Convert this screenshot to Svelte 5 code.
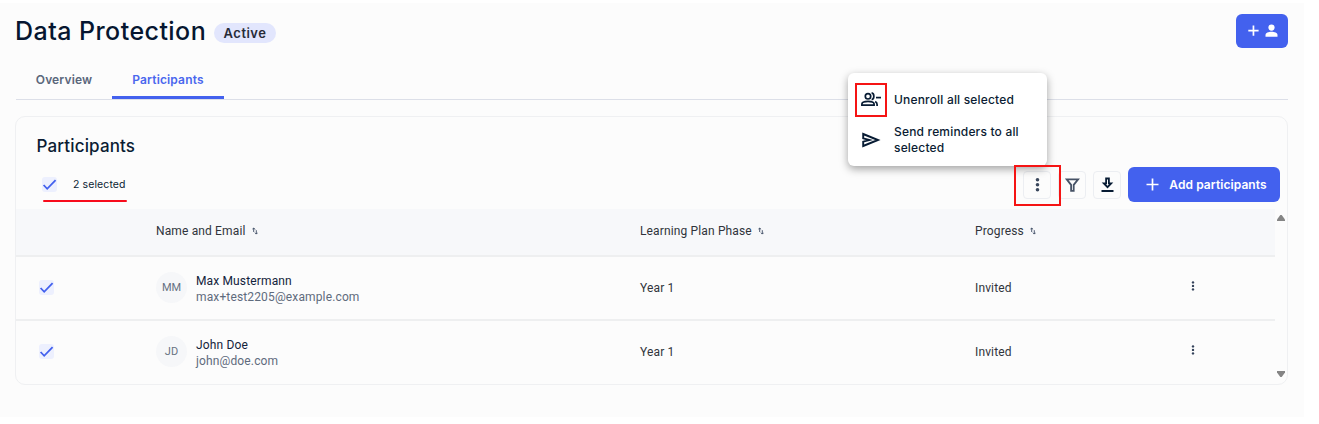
<script>
  let tabs = [
    { label: 'Overview', active: false },
    { label: 'Participants', active: true }
  ];

  let columns = ['Name and Email', 'Learning Plan Phase', 'Progress'];

  let participants = [
    { initials: 'MM', name: 'Max Mustermann', email: 'max+test2205@example.com', phase: 'Year 1', progress: 'Invited' },
    { initials: 'JD', name: 'John Doe', email: 'john@doe.com', phase: 'Year 1', progress: 'Invited' }
  ];
</script>

{#snippet checkbox()}
  <span class="checkbox">
    <svg width="15" height="15" viewBox="0 0 15 15" fill="none" stroke="#4361ee" stroke-width="1.8">
      <path d="M1.6 8 L5.2 11.8 L13.6 3.2" />
    </svg>
  </span>
{/snippet}

<div class="page">
  <header>
    <h1>Data Protection</h1>
    <span class="badge">Active</span>
    <button class="primary add-user" aria-label="Add user">
      <svg width="34" height="18" viewBox="0 0 34 18" fill="#fff">
        <path d="M7.6 3.5h1.7v4.3h4.3v1.7H9.3v4.3H7.600V9.5H3.3V7.8h4.3z" />
        <circle cx="26.5" cy="5.6" r="3.1" />
        <path d="M20.5 14.7v-1.7c0-2.2 3-3.3 6-3.3s6 1.1 6 3.3v1.7z" />
      </svg>
    </button>
  </header>

  <nav>
    {#each tabs as tab}
      <span class="tab" class:active={tab.active}>{tab.label}</span>
    {/each}
  </nav>

  <section class="card">
    <h2>Participants</h2>

    <!-- Selection info and actions -->
    <div class="toolbar">
      {@render checkbox()}
      <span class="selected">2 selected</span>

      <div class="actions">
        <button class="icon-btn" aria-label="More">
          <svg width="28" height="28" viewBox="0 0 28 28" fill="#3a475c">
            <circle cx="14.5" cy="8.7" r="1.8" />
            <circle cx="14.5" cy="13.7" r="1.8" />
            <circle cx="14.5" cy="18.7" r="1.8" />
          </svg>
        </button>
        <button class="icon-btn" aria-label="Filter">
          <svg width="28" height="28" viewBox="0 0 28 28" fill="none" stroke="#465266" stroke-width="1.8">
            <path d="M8.7 8.3h11.4l-4.4 5.6v6h-2.6v-6z" />
          </svg>
        </button>
        <button class="icon-btn" aria-label="Download">
          <svg width="28" height="28" viewBox="0 0 28 28" fill="none" stroke="#071b33" stroke-width="1.8">
            <path d="M13.1 7.5h2.8v4.8h2.3l-3.7 3.9l-3.7-3.9h2.3z" />
            <path d="M8.5 20h12" />
          </svg>
        </button>
        <button class="primary add-participants">
          <svg width="13" height="13" viewBox="0 0 13 13" stroke="#fff" stroke-width="1.7">
            <path d="M6.5 .5v12M.5 6.5h12" />
          </svg>
          Add participants
        </button>
      </div>
    </div>

    <div class="table-wrap">
      <div class="table">
        <div class="row head">
          <span></span>
          {#each columns as column}
            <span class="column">
              {column}
              <svg width="6" height="8" viewBox="0 0 6 8" fill="none" stroke="#3c4b62" stroke-width="0.9">
                <path d="M.3 2.4L1.7 1L3.1 2.4M1.7 1v4" />
                <path d="M2.9 5.7L4.3 7.1L5.7 5.7M4.3 7V3.2" />
              </svg>
            </span>
          {/each}
          <span></span>
        </div>

        {#each participants as person}
          <div class="row">
            {@render checkbox()}
            <div class="person">
              <span class="avatar">{person.initials}</span>
              <div>
                <div class="name">{person.name}</div>
                <div class="email">{person.email}</div>
              </div>
            </div>
            <span class="cell">{person.phase}</span>
            <span class="cell">{person.progress}</span>
            <svg class="row-menu" width="4" height="10" viewBox="0 0 4 10" fill="#33425a">
              <circle cx="2" cy="1.4" r="1.2" />
              <circle cx="2" cy="4.9" r="1.2" />
              <circle cx="2" cy="8.4" r="1.2" />
            </svg>
          </div>
        {/each}
      </div>

      <div class="scrollbar">
        <svg width="8" height="6" viewBox="0 0 8 6" fill="#858585"><path d="M3.3 0h1.4L8 4.5V6H0V4.5z" /></svg>
        <svg width="8" height="6" viewBox="0 0 8 6" fill="#858585"><path d="M0 0h8v1.5L4.7 6H3.3L0 1.5z" /></svg>
      </div>
    </div>
  </section>

  <!-- Bulk actions menu -->
  <div class="menu">
    <div class="menu-item">
      <svg width="22" height="18" viewBox="0 0 22 18" fill="none" stroke="#071b33" stroke-width="1.7">
        <circle cx="8" cy="5.3" r="2.7" />
        <path d="M1.9 14.2v-1.1c0-1.7 3-2.7 6.1-2.7s6.1 1 6.1 2.7v1.1z" />
        <path d="M11.6 1.9c3 .3 3 6.5 0 6.800" />
        <path d="M15.2 10.6c1.4.7 1.9 1.6 1.9 2.9v1.5" />
        <path d="M16 6.6h5" />
      </svg>
      <span>Unenroll all selected</span>
    </div>
    <div class="menu-item">
      <svg width="22" height="18" viewBox="0 0 22 18" fill="none" stroke="#071b33" stroke-width="1.9">
        <path d="M3.2 3L18 9L3.2 15V10.7L9.5 9L3.2 7.3z" />
      </svg>
      <span>Send reminders to all selected</span>
    </div>
  </div>

  <!-- Highlights -->
  <div class="mark mark-unenroll"></div>
  <div class="mark mark-more"></div>
  <div class="underline"></div>
</div>

<style>
  :global(body) {
    background: #fff;
  }

  .page {
    position: relative;
    box-sizing: border-box;
    width: 1304px;
    height: 414px;
    margin-top: 3px;
    padding: 11px 16px 0 15px;
    background: #fcfcfc;
    font-family: Inter, "Liberation Sans", sans-serif;
    color: #0b1c33;
  }

  button {
    font-family: inherit;
    padding: 0;
    display: flex;
    align-items: center;
    justify-content: center;
  }
  svg {
    display: block;
    flex: none;
  }

  /* Header */
  header {
    display: flex;
    align-items: center;
    height: 33px;
  }
  h1 {
    margin: 0;
    font-size: 25px;
    font-weight: 550;
    letter-spacing: 0.45px;
    width: 199px;
    white-space: nowrap;
    color: #061630;
  }
  .badge {
    width: 62px;
    height: 20px;
    margin-top: 5px;
    border-radius: 10px;
    background: #e2e6fd;
    color: #272b38;
    font-size: 13px;
    font-weight: 600;
    letter-spacing: 0.5px;
    line-height: 20px;
    text-align: center;
  }
  .primary {
    border: 0;
    border-radius: 6px;
    background: #4361ee;
    color: #fff;
  }
  .add-user {
    width: 52px;
    height: 34px;
    margin-left: auto;
  }

  /* Tabs */
  nav {
    display: flex;
    height: 52px;
    margin-left: 1px;
    border-bottom: 1px solid #dcdfe8;
  }
  .tab {
    box-sizing: border-box;
    width: 96px;
    height: 52px;
    padding-top: 25px;
    text-align: center;
    font-size: 12px;
    font-weight: 600;
    letter-spacing: 0.15px;
    line-height: 16px;
    color: #5a677b;
  }
  .tab.active {
    width: 112px;
    border-bottom: 3px solid #4361ee;
    color: #4a67ee;
  }

  /* Card */
  .card {
    box-sizing: border-box;
    height: 269px;
    margin-top: 16px;
    border: 1px solid #eff0f2;
    border-radius: 10px;
    overflow: hidden;
  }
  h2 {
    margin: 17px 0 0 20.5px;
    font-size: 17px;
    font-weight: 500;
    letter-spacing: 0.15px;
    line-height: 24px;
  }
  .toolbar {
    display: flex;
    align-items: center;
    height: 35px;
    margin: 9px 7px 7px 26px;
  }
  .checkbox {
    display: block;
    width: 15px;
    height: 15px;
    border-radius: 3px;
    background: #edf0fe;
  }
  .selected {
    margin-left: 16px;
    font-size: 10.5px;
    letter-spacing: 0.1px;
  }
  .actions {
    display: flex;
    align-items: center;
    gap: 7px;
    margin-left: auto;
  }
  .icon-btn {
    box-sizing: border-box;
    width: 28px;
    height: 28px;
    border: 1px solid #eceef2;
    border-radius: 4px;
    background: transparent;
  }
  .add-participants {
    box-sizing: border-box;
    width: 152px;
    height: 35px;
    padding-left: 5px;
    gap: 10px;
    font-size: 12px;
    font-weight: 600;
    letter-spacing: 0.08px;
  }

  /* Table */
  .table-wrap {
    display: flex;
    height: 176px;
    font-family: Roboto, "Liberation Sans", sans-serif;
    font-size: 12px;
    letter-spacing: 0.14px;
    color: #30343b;
  }
  .table {
    width: 1259px;
    flex: none;
  }
  .row {
    box-sizing: border-box;
    display: grid;
    grid-template-columns: 117px 484px 335px 216px 1fr;
    align-items: center;
    height: 64px;
    padding-left: 23px;
    border-top: 2px solid #eeeff0;
  }
  .row .checkbox {
    margin-top: -1px;
  }
  .row.head {
    height: 46px;
    padding-bottom: 2px;
    border-top: 0;
    background: #f7f8fa;
  }
  .column {
    display: flex;
    align-items: center;
    gap: 6px;
  }
  .cell {
    margin-top: -1px;
  }
  .person {
    display: flex;
    align-items: center;
    gap: 9px;
    margin-top: -2px;
    line-height: 16.5px;
  }
  .avatar {
    width: 31px;
    height: 31px;
    border-radius: 50%;
    background: #f6f7f9;
    color: #667182;
    font-size: 11px;
    line-height: 31px;
    letter-spacing: 0;
    text-align: center;
  }
  .name {
    margin-top: 4px;
    color: #13233b;
  }
  .email {
    color: #5f6b7d;
  }
  .row-menu {
    margin-top: -5px;
  }
  .scrollbar {
    display: flex;
    flex: 1;
    flex-direction: column;
    align-items: center;
    justify-content: space-between;
    padding: 6px 0 8px;
  }

  /* Menu */
  .menu {
    position: absolute;
    top: 70px;
    left: 848px;
    box-sizing: border-box;
    width: 199px;
    height: 93px;
    padding: 18px 13px 0 12px;
    border-radius: 6px;
    background: #fff;
    box-shadow: 0 3px 8px rgba(0, 0, 0, 0.36);
    font-size: 12px;
    font-weight: 500;
    letter-spacing: 0.18px;
    line-height: 16.5px;
  }
  .menu-item {
    display: flex;
    align-items: center;
    gap: 12px;
    margin-bottom: 14.5px;
  }

  /* Red marks */
  .mark {
    position: absolute;
    box-sizing: border-box;
    border: 2px solid #f51414;
  }
  .mark-unenroll {
    top: 80px;
    left: 855px;
    width: 32px;
    height: 34px;
  }
  .mark-more {
    top: 162px;
    left: 1014px;
    width: 47px;
    height: 41px;
  }
  .underline {
    position: absolute;
    top: 197px;
    left: 43px;
    width: 84px;
    height: 2px;
    border-radius: 1px;
    background: #f80c1c;
  }
</style>
